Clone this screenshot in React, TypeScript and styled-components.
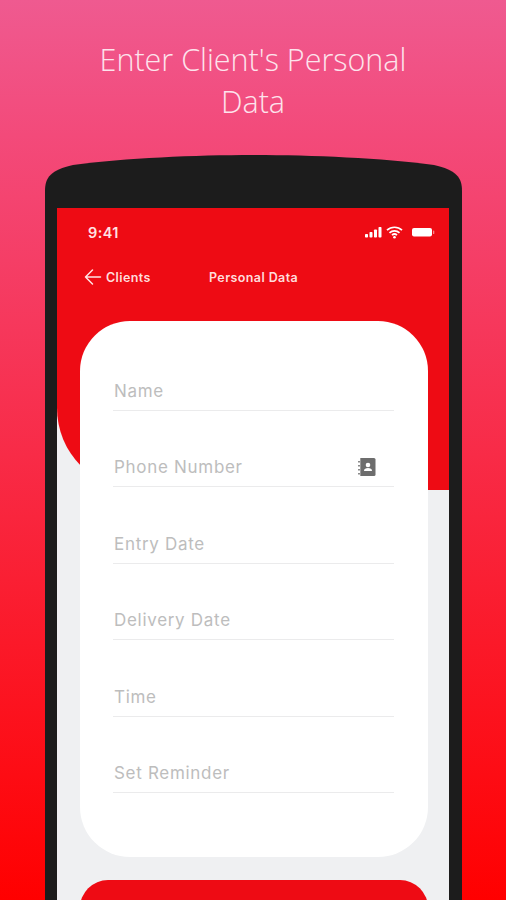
import React from "react";
import styled, { createGlobalStyle } from "styled-components";

const Global = createGlobalStyle`
  html, body { margin: 0; padding: 0; height: 100%; overflow: hidden; }
  #root { height: 100%; }
`;

const Page = styled.div`
  width: 506px;
  height: 900px;
  overflow: hidden;
  display: flex;
  flex-direction: column;
  align-items: center;
  background: linear-gradient(180deg, #ef5a90 0%, #f34a7a 15%, #ff0000 100%);
`;

const Title = styled.h1`
  margin: 38px 0 0;
  width: 340px;
  height: 117px;
  flex: none;
  font-family: "Open Sans", sans-serif;
  font-weight: 300;
  font-size: 30.5px;
  line-height: 42px;
  text-align: center;
  color: #fde3ec;
`;

const Phone = styled.div`
  width: 417px;
  flex: none;
  margin-left: 1px;
  height: 745px;
  padding: 53px 13px 0 12px;
  box-sizing: border-box;
  background: #1c1c1c;
  clip-path: path("M0 36 C0 22 6 15 28 10 C80 3 150 0 208.5 0 C267 0 337 3 389 10 C411 15 417 22 417 36 L417 745 L0 745 Z");
`;

const Screen = styled.div`
  position: relative;
  height: 692px;
  background: #eff0f2;
  overflow: hidden;
`;

const RedBackdrop = styled.div`
  position: absolute;
  left: 0;
  right: 0;
  top: 0;
  height: 282px;
  background: #ee0b14;
  border-bottom-left-radius: 82px;
`;

const Content = styled.div`
  position: relative;
  display: flex;
  flex-direction: column;
`;

const StatusBar = styled.div`
  display: flex;
  align-items: center;
  justify-content: space-between;
  height: 20px;
  margin-top: 14px;
  padding: 0 0 0 31px;
  color: #ffe3e4;
`;

const Clock = styled.span`
  font-family: "Inter", sans-serif;
  font-weight: 600;
  font-size: 14.5px;
  letter-spacing: 0.4px;
`;

const StatusIcons = styled.svg`
  width: 72px;
  height: 14px;
  margin-right: 12px;
`;

const NavBar = styled.div`
  display: flex;
  align-items: center;
  height: 20px;
  margin-top: 25px;
  padding-left: 27px;
  color: #ffdcdc;
  font-family: "Inter", sans-serif;
  font-size: 12.5px;
  font-weight: 600;
  letter-spacing: 0.4px;
`;

const BackIcon = styled.svg`
  width: 18px;
  height: 18px;
  flex: none;
`;

const BackLabel = styled.span`
  width: 103px;
  margin-left: 4px;
`;

const Card = styled.div`
  margin: 34px 0 0 23px;
  width: 348px;
  height: 536px;
  box-sizing: border-box;
  padding: 32px 34px 0 33px;
  background: #fff;
  border-radius: 50px;
`;

const Field = styled.div`
  display: flex;
  align-items: center;
  justify-content: space-between;
  height: 58px;
  margin-bottom: 18.4px;
  padding-top: 19px;
  box-sizing: border-box;
  border-bottom: 1.5px solid #ebebec;
  font-family: "Inter", sans-serif;
  font-size: 17px;
  letter-spacing: 0.7px;
  color: #bdbdbd;
`;

const FieldLabel = styled.span`
  margin-left: 1px;
`;

const ContactsIcon = styled.svg`
  width: 19px;
  height: 20px;
  margin-right: 18px;
`;

const ActionButton = styled.div`
  margin: 23px 0 0 23px;
  width: 348px;
  height: 80px;
  background: #ee0b14;
  border-radius: 28px;
`;

const fields = ["Name", "Phone Number", "Entry Date", "Delivery Date", "Time", "Set Reminder"];

export default function App() {
  return (
    <Page>
      <Global />
      <Title>Enter Client's Personal Data</Title>
      <Phone>
        <Screen>
          <RedBackdrop />
          <Content>
            <StatusBar>
              <Clock>9:41</Clock>
              <StatusIcons viewBox="0 0 72 14" fill="#fff">
                <rect x="0" y="9" width="3" height="3.5" rx="0.8" />
                <rect x="4.5" y="7" width="3" height="5.5" rx="0.8" />
                <rect x="9" y="4.5" width="3" height="8" rx="0.8" />
                <rect x="13.5" y="2" width="3" height="10.5" rx="0.8" />
                <path d="M22 5.2a11 11 0 0 1 15 0M24.5 7.8a7.2 7.2 0 0 1 10 0M27 10.2a3.6 3.6 0 0 1 5 0" fill="none" stroke="#fff" strokeWidth="1.7" />
                <circle cx="29.5" cy="12.2" r="1.3" />
                <rect x="47" y="3" width="20" height="8.5" rx="2" />
                <rect x="68" y="5.5" width="1.3" height="3.5" rx="0.6" opacity="0.5" />
              </StatusIcons>
            </StatusBar>
            <NavBar>
              <BackIcon viewBox="0 0 18 18" fill="none" stroke="#ffe4e4" strokeWidth="1.5" strokeLinecap="round" strokeLinejoin="round">
                <path d="M16.5 9H1.5M8.5 2 1.5 9l7 7" />
              </BackIcon>
              <BackLabel>Clients</BackLabel>
              <span>Personal Data</span>
            </NavBar>
            <Card>
              {fields.map((f) => (
                <Field key={f}>
                  <FieldLabel>{f}</FieldLabel>
                  {f === "Phone Number" && (
                    <ContactsIcon viewBox="0 0 19 20">
                      <path fill="#6d6d6d" d="M4 1h13a1.500 1.500 0 0 1 1.500 1.500v15a1.500 1.500 0 0 1-1.500 1.500H4Z" />
                      <path fill="#8a8a8a" d="M1 4h2v1.500H1zM1 8h2v1.500H1zM1 12h2v1.500H1zM1 16h2v1.500H1z" />
                      <rect x="3" y="1" width="1" height="18" fill="#9a9a9a" />
                      <circle cx="11" cy="8" r="2.300" fill="#fff" />
                      <path fill="#fff" d="M7 14c0-2.200 1.800-3 4-3s4 .8 4 3Z" />
                    </ContactsIcon>
                  )}
                </Field>
              ))}
            </Card>
            <ActionButton />
          </Content>
        </Screen>
      </Phone>
    </Page>
  );
}
